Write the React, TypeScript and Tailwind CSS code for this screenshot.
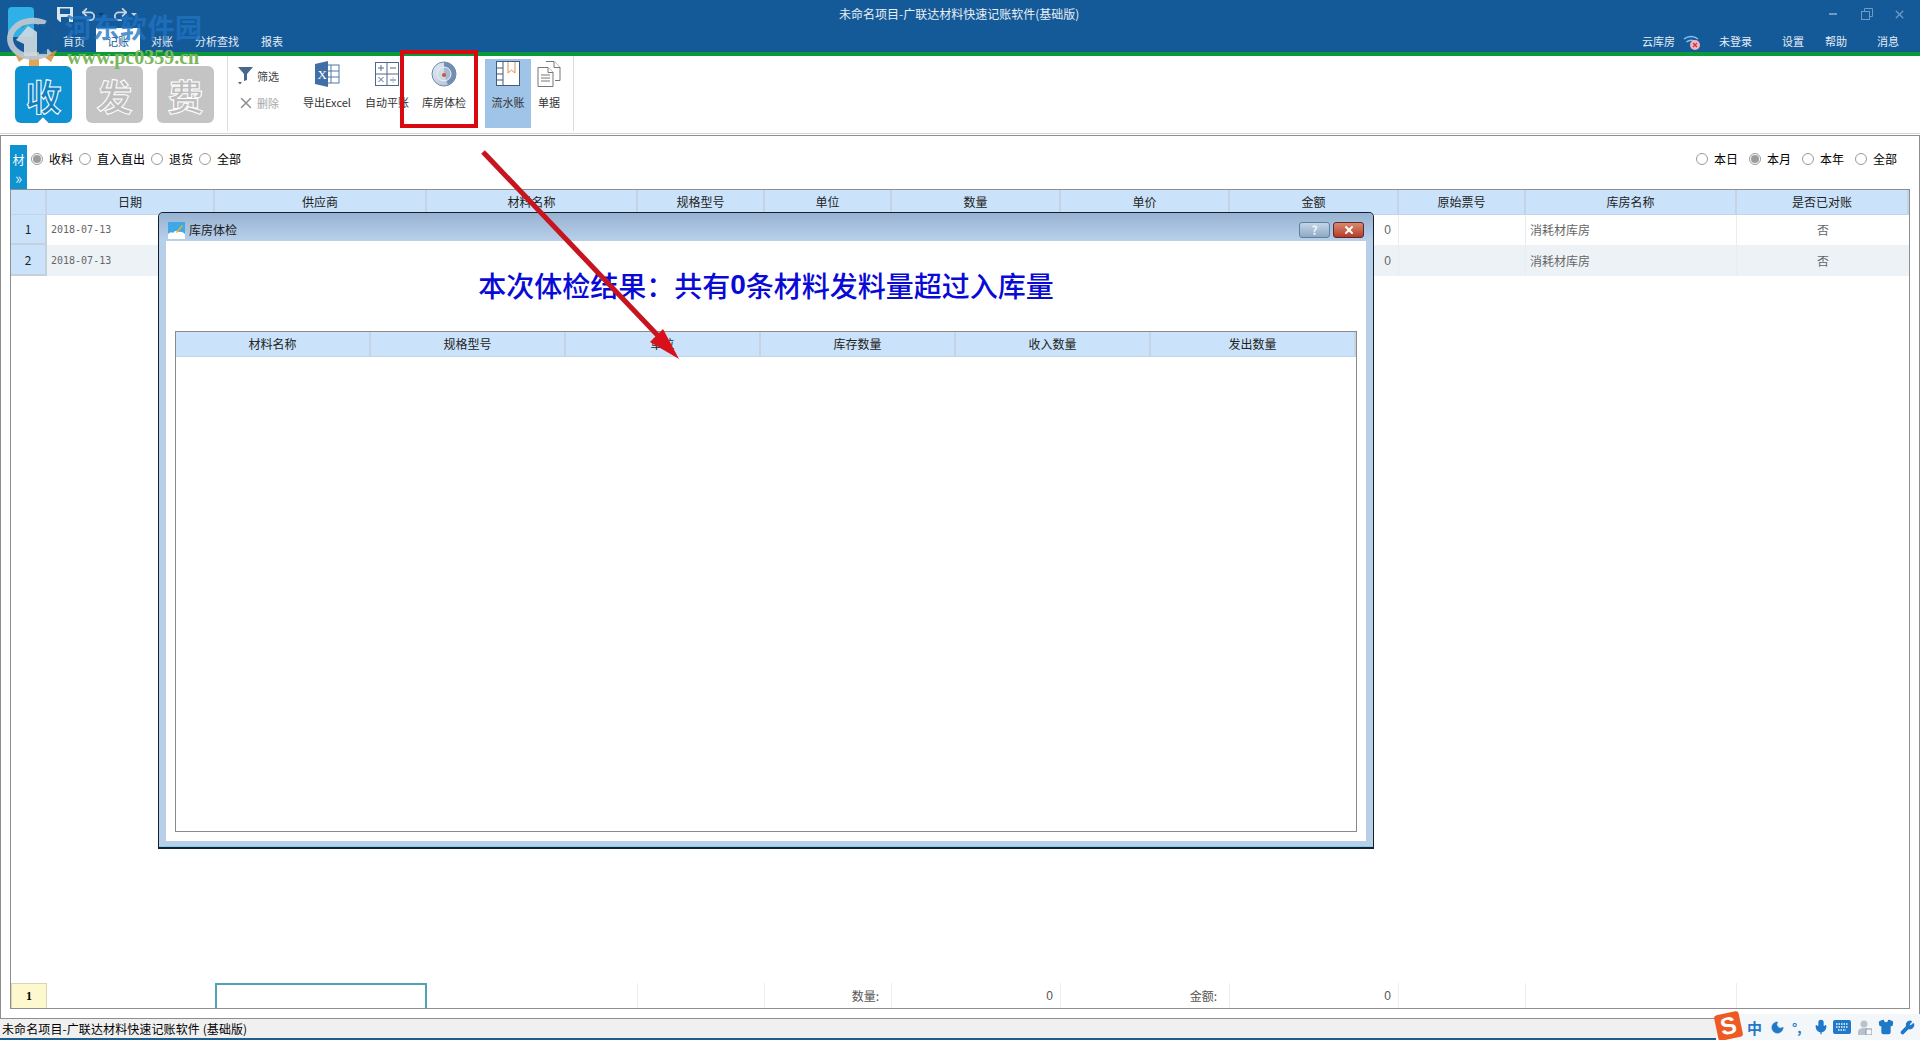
import { Mic, Moon, Redo2, Shirt, Undo2, Wrench, X } from "lucide-react";
import type { FC } from "react";

const FONT = "font-['Noto_Sans_CJK_SC','Liberation_Sans',sans-serif]";
const MAIN_COLS =
  "grid grid-cols-[36px_168px_212px_211px_127px_127px_169px_169px_169px_127px_211px_1fr]";
const HEAD_CELL =
  "flex items-center justify-center border-r-2 border-b border-[#c4d4e4] bg-[#cae3fa] text-xs text-[#222]";

const mainHeaders = [
  "",
  "日期",
  "供应商",
  "材料名称",
  "规格型号",
  "单位",
  "数量",
  "单价",
  "金额",
  "原始票号",
  "库房名称",
  "是否已对账",
];

const popupHeaders = ["材料名称", "规格型号", "单位", "库存数量", "收入数量", "发出数量"];

const Radio: FC<{ label: string; checked?: boolean }> = ({ label, checked }) => (
  <label className="flex items-center gap-[6px] text-xs text-black">
    <span className="flex h-[12px] w-[12px] items-center justify-center rounded-full border border-[#9a9a9a] bg-white">
      {checked && <span className="h-[8px] w-[8px] rounded-full bg-[#9c9c9c]" />}
    </span>
    {label}
  </label>
);

const BigButton: FC<{ text: string; active?: boolean }> = ({ text, active }) => (
  <div
    className={
      active
        ? "relative flex h-[57px] w-[57px] items-center justify-center rounded-md bg-[#0f92d4] text-[36px] leading-none font-bold text-[#0f7fc0] [-webkit-text-stroke:1px_white]"
        : "flex h-[57px] w-[57px] items-center justify-center rounded-md bg-[#c4c4c4] text-[36px] leading-none font-bold text-[#bdbdbd] [-webkit-text-stroke:1px_white]"
    }
  >
    {text}
    {active && (
      <span className="absolute -bottom-[4px] left-[24px] h-[8px] w-[8px] rotate-45 bg-white" />
    )}
  </div>
);

const ExcelIcon = () => (
  <svg width="26" height="26" viewBox="0 0 26 26">
    <rect x="10" y="4" width="15" height="18" fill="#fff" stroke="#4d78a8" />
    <path d="M10 10h15M10 16h15M17 4v18" stroke="#4d78a8" />
    <path d="M1 3l13-3v26L1 23z" fill="#3f6fa6" />
    <text x="3.5" y="18" fontSize="13" fontFamily="Liberation Serif" fill="#fff">
      X
    </text>
  </svg>
);

const CalcIcon = () => (
  <svg width="24" height="24" viewBox="0 0 24 24" fill="none" stroke="#51688a">
    <rect x="0.5" y="0.5" width="23" height="23" />
    <path d="M12 0v24M0 12h24" />
    <path d="M3 6h6M6 3v6M15 6h6M3.5 15l5 5M8.5 15l-5 5M15 18h6M18 15.5v.8M18 19.7v.8" />
  </svg>
);

const RadarIcon = () => (
  <svg width="26" height="26" viewBox="0 0 26 26">
    <defs>
      <linearGradient id="radar" x1="0" y1="0" x2="1" y2="1">
        <stop offset="0" stopColor="#e6ecf3" />
        <stop offset="1" stopColor="#a9bdd3" />
      </linearGradient>
    </defs>
    <circle cx="13" cy="13" r="12" fill="url(#radar)" stroke="#6c8aac" />
    <path d="M13 1a12 12 0 0 1 12 12 12 12 0 0 1-8 11L13 13z" fill="#6f8fb3" />
    <circle cx="13" cy="13" r="7" fill="#d5dfea" fillOpacity="0.55" stroke="#eef2f7" />
    <circle cx="13" cy="14" r="2" fill="#d6503f" />
  </svg>
);

const BookIcon = () => (
  <svg width="24" height="26" viewBox="0 0 24 26" fill="none">
    <rect x="0.5" y="0.5" width="23" height="24" fill="#fff" stroke="#3f5d7d" />
    <path d="M7 0v25M0 7h7M0 13h7M0 19h7" stroke="#3f5d7d" />
    <path d="M12 1v11l3.5-3 3.5 3V1" stroke="#d9924a" />
  </svg>
);

const DocIcon = () => (
  <svg width="24" height="26" viewBox="0 0 24 26" fill="#fff" stroke="#777">
    <path d="M9 .5h8l6 6v13h-5" />
    <path d="M17 .5v6h6" />
    <path d="M1 6.5h10l5 5v14H1z" />
    <path d="M11 6.5v5h5M4 14h9M4 17h9M4 20h9" />
  </svg>
);

const FilterIcon = () => (
  <svg width="15" height="18" viewBox="0 0 15 18" fill="#44688f">
    <path d="M0 0h15L9 7v6l-3 1V7z" />
    <path d="M0 15h4l-2 2.5z" />
  </svg>
);

const ToolItem: FC<{ label: string; width: string; children: React.ReactNode }> = ({
  label,
  width,
  children,
}) => (
  <div className={`mt-[3px] flex h-[69px] flex-col items-center pt-[3px] ${width}`}>
    <div className="flex h-[24px] items-center justify-center">{children}</div>
    <span className="mt-[8px] text-[11px] leading-4 whitespace-nowrap text-[#333]">{label}</span>
  </div>
);

const TitleBar = () => (
  <div className="flex h-[52px] flex-col bg-[#155a98] text-white">
    <div className="relative flex h-[28px] items-center">
      <div className="ml-[57px] flex items-center text-[#c9d6e4]">
        <svg width="16" height="15" viewBox="0 0 16 15" fill="#dce5ee">
          <path d="M0 0h16v15H3l-3-3z" />
          <rect x="3" y="1.5" width="10" height="5.5" fill="#155a98" />
          <rect x="4" y="10" width="8" height="5" fill="#155a98" />
        </svg>
        <Undo2 className="ml-[7px]" size={17} strokeWidth={2.5} />
        <span className="ml-[1px] h-0 w-0 border-x-[3px] border-t-[3px] border-x-transparent border-t-[#0c3d6b]" />
        <Redo2 className="ml-[8px]" size={17} strokeWidth={2.5} />
        <span className="ml-[2px] h-0 w-0 border-x-[3px] border-t-[3px] border-x-transparent border-t-[#c9d6e4]" />
      </div>
      <span className="absolute left-[839px] text-xs whitespace-nowrap text-[#e8eef5]">
        未命名项目-广联达材料快速记账软件(基础版)
      </span>
      <div className="ml-auto flex items-center pr-[14px] text-[#4f84b8]">
        <span className="h-[2px] w-[8px] bg-[#6f9ac4]" />
        <svg className="ml-[24px]" width="12" height="12" viewBox="0 0 12 12" fill="none" stroke="#6f9ac4">
          <path d="M3.5 3V.5h8v8H9" />
          <rect x="0.5" y="3.5" width="8" height="8" />
        </svg>
        <X className="ml-[20px] text-[#6f9ac4]" size={13} strokeWidth={2.5} />
      </div>
    </div>
    <div className="flex h-[24px] items-stretch text-[11px] text-[#e4ecf4]">
      <span className="ml-[63px] flex items-center pt-[3px]">首页</span>
      <span className="ml-[11px] flex w-[44px] items-center justify-center bg-white pt-[3px] text-[#155a98]">
        记账
      </span>
      <span className="ml-[11px] flex items-center pt-[3px]">对账</span>
      <span className="ml-[22px] flex items-center pt-[3px]">分析查找</span>
      <span className="ml-[22px] flex items-center pt-[3px]">报表</span>
      <div className="ml-auto flex items-center pt-[3px] pr-[21px]">
        <span>云库房</span>
        <svg className="ml-[8px]" width="18" height="18" viewBox="0 0 18 18" fill="none">
          <path d="M1 6a11 11 0 0 1 14 0M3.5 9a7 7 0 0 1 9 0" stroke="#7fc4ee" strokeWidth="1.6" />
          <circle cx="12" cy="12" r="5" fill="#f2b4c2" />
          <path d="M10 10l4 4M14 10l-4 4" stroke="#d0343f" strokeWidth="1.3" />
        </svg>
        <span className="ml-[18px]">未登录</span>
        <span className="ml-[30px]">设置</span>
        <span className="ml-[21px]">帮助</span>
        <span className="ml-[30px]">消息</span>
      </div>
    </div>
  </div>
);

const Ribbon = () => (
  <div className="flex h-[78px] border-b border-[#d4d4d4] bg-white pl-[15px]">
    <div className="flex w-[212px] gap-[14px] pt-[10px]">
      <BigButton text="收" active />
      <BigButton text="发" />
      <BigButton text="费" />
    </div>
    <div className="h-[75px] w-px bg-[#dcdcdc]" />
    <div className="flex w-[69px] flex-col gap-[9px] pt-[11px] pl-[10px] text-[11px]">
      <div className="flex h-[18px] items-center gap-[4px] text-[#444]">
        <FilterIcon />
        筛选
      </div>
      <div className="flex h-[18px] items-center gap-[2px] text-[#a8a8a8]">
        <X className="-ml-[1px] text-[#8f8f8f]" size={18} strokeWidth={2} />
        删除
      </div>
    </div>
    <ToolItem label="导出Excel" width="w-[60px]">
      <ExcelIcon />
    </ToolItem>
    <ToolItem label="自动平账" width="w-[60px]">
      <CalcIcon />
    </ToolItem>
    <ToolItem label="库房体检" width="w-[54px]">
      <RadarIcon />
    </ToolItem>
    <div className="ml-[14px] flex">
      <div className="mt-[3px] flex h-[69px] w-[46px] flex-col items-center bg-[#a0c4e8] pt-[3px]">
        <div className="flex h-[24px] items-center">
          <BookIcon />
        </div>
        <span className="mt-[8px] text-[11px] leading-4 text-[#333]">流水账</span>
      </div>
      <ToolItem label="单据" width="w-[36px]">
        <DocIcon />
      </ToolItem>
    </div>
    <div className="ml-[6px] h-[75px] w-px bg-[#dcdcdc]" />
  </div>
);

const Row: FC<{ no: number; striped?: boolean; last?: boolean }> = ({ no, striped, last }) => (
  <div
    className={`${MAIN_COLS} ${last ? "h-[31px]" : "h-[30px]"} text-xs text-[#666] ${
      striped ? "bg-[#ecf2f6]" : "bg-white"
    }`}
  >
    <div className="flex items-center justify-center border-r-2 border-b-2 border-[#c4d0da] bg-[#cae3fa] text-[#222]">
      {no}
    </div>
    <div className="flex items-center pl-[4px] font-['DejaVu_Sans_Mono',monospace] text-[10px]">
      2018-07-13
    </div>
    <div />
    <div />
    <div />
    <div />
    <div />
    <div />
    <div className="flex items-center justify-end border-r border-[#e8edf1] pr-[7px] font-['Liberation_Sans',sans-serif]">
      0
    </div>
    <div className="border-r border-[#e8edf1]" />
    <div className="flex items-center border-r border-[#e8edf1] pl-[4px]">消耗材库房</div>
    <div className="flex items-center justify-center">否</div>
  </div>
);

const FooterRow = () => (
  <div className={`${MAIN_COLS} h-[25px] text-xs text-[#555]`}>
    <div className="flex items-center justify-center border-x border-t border-[#d8d4b4] bg-[#fdf8cd] font-['Liberation_Serif',serif] font-bold text-black">
      1
    </div>
    <div />
    <div className="border-x-2 border-t-2 border-[#4fa3b8]" />
    <div className="border-r border-[#eeeeee]" />
    <div className="border-r border-[#eeeeee]" />
    <div className="flex items-center justify-end border-r border-[#eeeeee] pr-[12px]">数量:</div>
    <div className="flex items-center justify-end border-r border-[#eeeeee] pr-[7px] font-['Liberation_Sans',sans-serif]">
      0
    </div>
    <div className="flex items-center justify-end border-r border-[#eeeeee] pr-[12px]">金额:</div>
    <div className="flex items-center justify-end border-r border-[#eeeeee] pr-[7px] font-['Liberation_Sans',sans-serif]">
      0
    </div>
    <div className="border-r border-[#eeeeee]" />
    <div className="border-r border-[#eeeeee]" />
    <div />
  </div>
);

const Popup = () => (
  <div className="absolute top-[212px] left-[158px] flex h-[637px] w-[1216px] flex-col rounded-t-[5px] border border-b-2 border-[#14202c] bg-[#b8cfe9] shadow-[inset_0_-1px_0_#7fd0f0]">
    <div className="flex h-[28px] items-center rounded-t-[5px] bg-gradient-to-b from-[#98b2d2] to-[#b8d0ea] px-[9px] pt-[6px]">
      <svg width="17" height="17" viewBox="0 0 17 17">
        <rect width="17" height="17" fill="#3fa9e6" />
        <path d="M0 17v-5q3-3 5-1 3-4 6-1 3-1 6 2v5z" fill="#fff" />
        <path d="M8 10l6-7 1 1-6 7z" fill="#f0b030" />
      </svg>
      <span className="ml-[4px] text-xs text-[#1a1a1a]">库房体检</span>
      <div className="ml-auto flex gap-[3px]">
        <span className="flex h-[16px] w-[31px] items-center justify-center rounded-[3px] border border-[#5f7f9f] bg-gradient-to-b from-[#c4d6e8] to-[#8fa9c5] text-xs leading-none font-bold text-[#f2f5f8]">
          ?
        </span>
        <span className="flex h-[16px] w-[31px] items-center justify-center rounded-[3px] border border-[#5c2a2a] bg-gradient-to-b from-[#d98a70] to-[#b53a28] text-white">
          <X size={12} strokeWidth={4} />
        </span>
      </div>
    </div>
    <div className="mx-[7px] flex h-[600px] flex-col bg-white">
      <div className="flex h-[90px] items-center justify-center pb-[3px] text-[28px] leading-none font-medium text-[#0a0ad6]">
        本次体检结果：共有<span className="font-['Liberation_Sans',sans-serif] font-bold">0</span>
        条材料发料量超过入库量
      </div>
      <div className="mx-[9px] flex h-[501px] flex-col border border-[#8a8a8a]">
        <div className="grid h-[25px] grid-cols-[195px_195px_195px_195px_195px_1fr]">
          {popupHeaders.map((title) => (
            <div className={HEAD_CELL} key={title}>
              {title}
            </div>
          ))}
        </div>
      </div>
    </div>
  </div>
);

const Watermark = () => (
  <div className="pointer-events-none absolute top-0 left-0">
    <svg className="absolute top-0 left-0" width="70" height="72" viewBox="0 0 70 72" fill="none">
      <rect x="8" y="7" width="26" height="30" rx="4" fill="#2fb0e6" />
      <path d="M20 26l6-8 3 2-6 8z" fill="#5d8a78" />
      <rect x="29" y="52" width="10" height="14" fill="#e09a48" opacity="0.9" />
      <path d="M13 50l14 6-8 6zM57 50l-14 6 8 6z" fill="#d8913e" opacity="0.85" />
      <path d="M46 24a23 18 0 1 0 4 27" stroke="#b9c6d2" strokeWidth="6" opacity="0.95" />
      <path d="M46 22a23 18 0 0 1 6 24" stroke="#1a5a96" strokeWidth="6" opacity="0.9" />
      <path d="M16 40l12-14 9 6v24H24V44z" fill="#d2dae2" opacity="0.9" />
      <path d="M39 24h8v30h-8z" fill="#155a98" opacity="0.9" />
    </svg>
    <span className="absolute top-[13px] left-[65px] text-[27px] leading-none font-bold tracking-[0.5px] whitespace-nowrap text-[#1f74c4]/80">
      河东软件园
    </span>
    <span className="absolute top-[47px] left-[67px] font-['Liberation_Serif',serif] text-[20px] leading-none font-bold whitespace-nowrap text-[#7cb65c]">
      www.pc0359.cn
    </span>
  </div>
);

const Arrow = () => (
  <svg className="pointer-events-none absolute top-0 left-0" width="1920" height="1040">
    <path d="M486 154L670 348" stroke="#8a8a8a" strokeOpacity="0.45" strokeWidth="4" />
    <path d="M483 152L664 342" stroke="#c8141e" strokeWidth="5" />
    <path d="M679 359L650 342L663 329z" fill="#d8101c" />
  </svg>
);

const SogouBar = () => (
  <div className="flex h-[26px] items-center bg-[#f4f7fa] pr-[5px] text-[#1f78c8]">
    <span className="-mt-[2px] flex h-[26px] w-[25px] -rotate-12 items-center justify-center rounded-[3px] bg-[#ee5a24] font-['Liberation_Sans',sans-serif] text-[24px] leading-none font-bold text-white">
      S
    </span>
    <span className="ml-[6px] w-[15px] text-[15px] leading-none font-bold">中</span>
    <Moon className="ml-[8px] fill-[#1f78c8]" size={15} strokeWidth={1} />
    <span className="ml-[7px] w-[11px] text-[13px] leading-none font-bold">°,</span>
    <Mic className="ml-[10px] fill-[#1f78c8]" size={16} strokeWidth={2} />
    <svg className="ml-[4px]" width="18" height="14" viewBox="0 0 18 14" fill="#1f78c8">
      <rect width="18" height="14" rx="2" />
      <path d="M3 4h12M3 7h12M5 10h8" stroke="#f4f7fa" strokeWidth="1.4" strokeDasharray="1.5 1" />
    </svg>
    <svg className="ml-[7px]" width="14" height="15" viewBox="0 0 14 15" fill="#b8c2cc">
      <circle cx="6" cy="4" r="3.5" />
      <path d="M0 15v-3q0-4 6-4t6 4v3z" />
      <rect x="8" y="9" width="6" height="6" fill="#f4f7fa" stroke="#8a96a2" />
    </svg>
    <Shirt className="ml-[6px] fill-[#1f78c8]" size={16} />
    <Wrench className="ml-[6px] fill-[#1f78c8]" size={15} />
  </div>
);

export default function App() {
  return (
    <div className={`relative flex h-[1040px] w-[1920px] flex-col overflow-hidden bg-white ${FONT}`}>
      <TitleBar />
      <div className="h-[4px] bg-[#0a9a38]" />
      <Ribbon />
      <div className="mt-px flex flex-1 flex-col border border-[#8f8f8f] bg-white px-[9px] pb-[9px]">
        <div className="flex h-[53px]">
          <div className="mt-[9px] flex h-[44px] w-[17px] flex-col items-center bg-[#0f92d0] pt-[8px] text-xs leading-[14px] text-white">
            材<span className="mt-[3px] text-base leading-[14px] font-light">»</span>
          </div>
          <div className="mt-[15px] ml-[4px] flex h-[16px] gap-[6px]">
            <Radio label="收料" checked />
            <Radio label="直入直出" />
            <Radio label="退货" />
            <Radio label="全部" />
          </div>
          <div className="mt-[15px] ml-auto flex h-[16px] gap-[11px] pr-[13px]">
            <Radio label="本日" />
            <Radio label="本月" checked />
            <Radio label="本年" />
            <Radio label="全部" />
          </div>
        </div>
        <div className="flex flex-1 flex-col border border-[#8f8f8f]">
          <div className={`${MAIN_COLS} h-[25px]`}>
            {mainHeaders.map((title, i) => (
              <div className={HEAD_CELL} key={i}>
                {title}
              </div>
            ))}
          </div>
          <Row no={1} />
          <Row no={2} striped last />
          <div className="flex-1" />
          <FooterRow />
        </div>
      </div>
      <div className="relative flex h-[21px] items-end justify-between border-b-2 border-[#1d5f8f] bg-[#f0f0f0] pl-[2px] text-xs leading-[18px] text-black">
        <span className="self-center tracking-[0.1px]">未命名项目-广联达材料快速记账软件 (基础版)</span>
        <div className="absolute right-0 bottom-[-2px]">
          <SogouBar />
        </div>
      </div>
      <Popup />
      <Watermark />
      <div className="pointer-events-none absolute top-[50px] left-[400px] h-[78px] w-[78px] border-4 border-[#d8090f]" />
      <Arrow />
    </div>
  );
}
